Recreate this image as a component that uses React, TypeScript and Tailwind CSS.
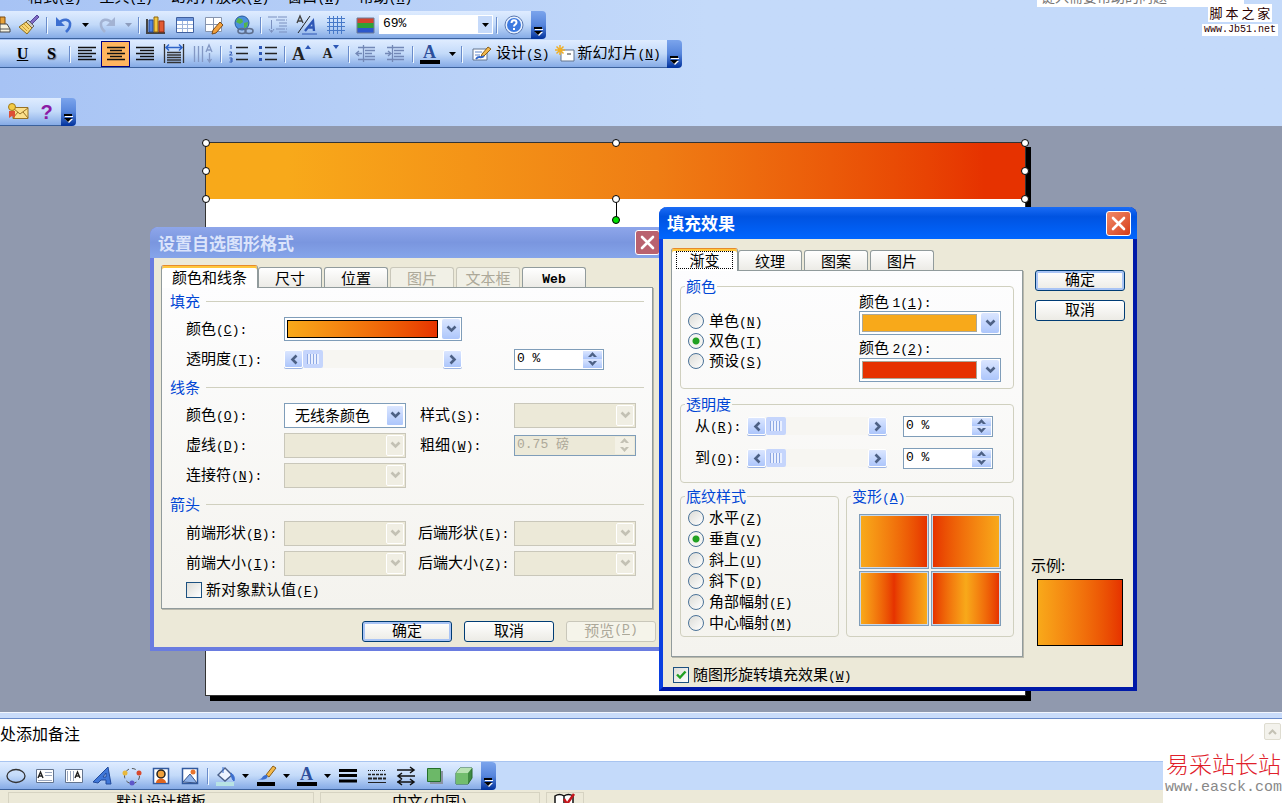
import { useState, type ReactNode } from "react";

const btnBlue = "bg-linear-to-b from-[#dbe6ff] to-[#adc6fb]";

function Icon({ children, label }: { children: ReactNode; label: string }) {
  return (
    <button type="button" aria-label={label} className="flex h-full w-[29px] shrink-0 items-center justify-center">
      <svg width="22" height="22" viewBox="0 0 22 22" fill="none">{children}</svg>
    </button>
  );
}

function Sep() {
  return (
    <span className="flex w-1.5 shrink-0 justify-center">
      <span className="h-4 w-px bg-[#6a8ccb] shadow-[1px_1px_0_#f1f9ff]" />
    </span>
  );
}

function Drop({ wide, dim }: { wide?: boolean; dim?: boolean }) {
  return (
    <button type="button" aria-label="更多" className={`flex h-full shrink-0 items-center justify-center ${wide ? "w-3.5" : "w-3"}`}>
      <svg width="7" height="4" viewBox="0 0 7 4"><path d="M0 0h7L3.500 4z" fill={dim ? "#8d9dbd" : "#000"} /></svg>
    </button>
  );
}

function Toolbar({ children, label }: { children: ReactNode; label: string }) {
  return (
    <div role="toolbar" aria-label={label} className="flex h-7 w-fit items-stretch">
      <div className="flex items-center border-b border-[#3b619c] bg-linear-to-b from-[#dfecff] via-[#c3daf9] to-[#86abe6]">
        {children}
      </div>
      <button
        type="button"
        aria-label="工具栏选项"
        className="flex w-[15px] items-end justify-center rounded-r bg-linear-to-b from-[#7ba4ec] via-[#5685dc] to-[#00309c] pb-0.5"
      >
        <svg width="9" height="10" viewBox="0 0 9 10">
          <path d="M1 2h8v1H1z" fill="#fff" />
          <path d="M0 0h8v2H0z" fill="#000" />
          <path d="M1 5h8L5 9z" fill="#fff" />
          <path d="M0 4h8L4 8z" fill="#000" />
        </svg>
      </button>
    </div>
  );
}

function Key({ k, colon }: { k: string; colon?: boolean }) {
  return (
    <span className="font-['Liberation_Mono',monospace] text-[13px]">
      (<u>{k}</u>){colon ? ":" : ""}
    </span>
  );
}

function Label({ text, k, id, className = "" }: { text: string; k: string; id: string; className?: string }) {
  return (
    <label htmlFor={id} className={`leading-5 whitespace-nowrap ${className}`}>
      {text}
      <Key k={k} colon />
    </label>
  );
}

function Chevron({ dim }: { dim?: boolean }) {
  return (
    <svg width="11" height="8" viewBox="0 0 11 8" fill="none">
      <path d="M1.500 1.500l4 4 4-4" stroke={dim ? "#c3c1b4" : "#4d6185"} strokeWidth="2.600" />
    </svg>
  );
}

function Combo({ id, value }: { id: string; value?: string }) {
  const off = value === undefined;
  return (
    <div className={`relative h-[25px] border ${off ? "border-[#c9c7ba] bg-[#ece9d8]" : "border-[#7f9db9] bg-white"}`}>
      <select id={id} disabled={off} className="h-full w-full appearance-none pl-2.5">
        {value && <option>{value}</option>}
      </select>
      <span
        className={`pointer-events-none absolute top-px right-px bottom-px flex w-[18px] items-center justify-center rounded-xs border border-white ${off ? "bg-[#f0eee3]" : btnBlue}`}
      >
        <Chevron dim={off} />
      </span>
    </div>
  );
}

function ColorCombo({ id, swatch }: { id: string; swatch: string }) {
  return (
    <button id={id} type="button" aria-haspopup="listbox" className="flex h-6 w-full items-stretch gap-1 border border-[#7f9db9] bg-white p-px">
      <span className={`my-px ml-px flex-1 border ${swatch}`} />
      <span className={`flex w-[18px] items-center justify-center rounded-xs ${btnBlue}`}>
        <Chevron />
      </span>
    </button>
  );
}

function Spin({ id, value, disabled }: { id: string; value: string; disabled?: boolean }) {
  const btn = `flex h-1/2 w-full items-center justify-center ${disabled ? "bg-[#f3f1e6]" : btnBlue}`;
  const color = disabled ? "#c3c1b4" : "#4d6185";
  return (
    <div className={`flex h-[21px] border border-[#7f9db9] p-px ${disabled ? "bg-[#ece9d8]" : "bg-white"}`}>
      <input
        id={id}
        defaultValue={value}
        disabled={disabled}
        className="w-full min-w-0 flex-1 pl-px font-['Liberation_Mono','Noto_Sans_CJK_SC',monospace] text-[13px] disabled:text-[#aca899]"
      />
      <span className="flex w-[19px] shrink-0 flex-col">
        <button type="button" aria-label="增加" disabled={disabled} className={btn}>
          <svg width="9" height="5" viewBox="0 0 9 5"><path d="M0 5l4.500-5L9 5H6L4.500 3.500 3 5z" fill={color} /></svg>
        </button>
        <button type="button" aria-label="减少" disabled={disabled} className={btn}>
          <svg width="9" height="5" viewBox="0 0 9 5"><path d="M0 0l4.500 5L9 0H6L4.500 1.500 3 0z" fill={color} /></svg>
        </button>
      </span>
    </div>
  );
}

function Slider({ id }: { id: string }) {
  const arrow = `flex w-[19px] shrink-0 items-center justify-center rounded-xs border border-white shadow-[0_1px_0_#9db5e4] ${btnBlue}`;
  return (
    <div className="flex h-[18px] items-stretch bg-[#f7f6f2]">
      <button type="button" aria-label="向左" className={arrow}>
        <svg width="8" height="11" viewBox="0 0 8 11" fill="none"><path d="M6.500 1.500l-4 4 4 4" stroke="#4d6185" strokeWidth="2.600" /></svg>
      </button>
      <input
        id={id}
        type="range"
        defaultValue={0}
        className="m-0 h-full w-0 min-w-0 flex-1 appearance-none bg-transparent [&::-webkit-slider-thumb]:h-[18px] [&::-webkit-slider-thumb]:w-5 [&::-webkit-slider-thumb]:appearance-none [&::-webkit-slider-thumb]:rounded-xs [&::-webkit-slider-thumb]:border-4 [&::-webkit-slider-thumb]:border-[#c5d5fc] [&::-webkit-slider-thumb]:bg-[repeating-linear-gradient(90deg,#8ea9e4_0_1px,#eaf0ff_1px_3px)]"
      />
      <button type="button" aria-label="向右" className={arrow}>
        <svg width="8" height="11" viewBox="0 0 8 11" fill="none"><path d="M1.500 1.500l4 4-4 4" stroke="#4d6185" strokeWidth="2.600" /></svg>
      </button>
    </div>
  );
}

function PushButton({ children, primary, disabled }: { children: ReactNode; primary?: boolean; disabled?: boolean }) {
  const look = disabled
    ? "border-[#c9c7ba] bg-[#f5f4ea] text-[#aca899]"
    : primary
      ? "border-[#003c74] bg-linear-to-b from-white to-[#ecebe5] text-black shadow-[inset_0_0_0_2px_#a9c4f5]"
      : "border-[#003c74] bg-linear-to-b from-white to-[#ecebe5] text-black";
  return (
    <button type="button" disabled={disabled} className={`flex h-[21px] w-[90px] items-center justify-center rounded-[3px] border pb-1 leading-4 ${look}`}>
      {children}
    </button>
  );
}

function Tab({
  children,
  active,
  disabled,
  width = "w-16",
  onClick,
}: {
  children: ReactNode;
  active?: boolean;
  disabled?: boolean;
  width?: string;
  onClick?: () => void;
}) {
  return (
    <button
      type="button"
      role="tab"
      aria-selected={!!active}
      disabled={disabled}
      onClick={onClick}
      className={`rounded-t-[3px] border border-b-0 whitespace-nowrap ${width} ${
        active
          ? "z-10 -mr-0.5 -mb-px h-[23px] border-[#919b9c] border-t-[#e68b2c] bg-white leading-5 shadow-[inset_0_2px_0_#ffc73c]"
          : disabled
            ? "h-5 border-[#c9c7ba] bg-[#f1f0e6] leading-[18px] text-[#aca899]"
            : "h-5 border-[#919b9c] bg-linear-to-b from-white to-[#ecebe6] leading-[18px]"
      }`}
    >
      {children}
    </button>
  );
}

function CloseButton({ dim }: { dim?: boolean }) {
  return (
    <button
      type="button"
      aria-label="关闭"
      className={`flex size-[25px] items-center justify-center rounded-[3px] border border-white ${dim ? "bg-[#b9626f]" : "bg-linear-to-br from-[#f08a68] to-[#d63a12]"}`}
    >
      <svg width="15" height="15" viewBox="0 0 15 15"><path d="M2 2l11 11M13 2L2 13" stroke="#fff" strokeWidth="2.600" strokeLinecap="round" /></svg>
    </button>
  );
}

function Check({ text, k, checked }: { text: string; k: string; checked?: boolean }) {
  return (
    <label className="flex h-6 items-center gap-1 leading-5 whitespace-nowrap">
      <span className="relative size-4">
        <input type="checkbox" defaultChecked={checked} className="peer block size-4 appearance-none border border-[#1c5180] bg-linear-to-br from-[#dcdcd7] to-white" />
        <svg viewBox="0 0 16 16" className="pointer-events-none absolute inset-0 hidden peer-checked:block">
          <path d="M4 7.500l3 3 5.500-6" stroke="#21a121" strokeWidth="2.400" fill="none" />
        </svg>
      </span>
      <span>{text}<Key k={k} /></span>
    </label>
  );
}

function Radio({ name, text, k, checked }: { name: string; text: string; k: string; checked?: boolean }) {
  return (
    <label className="flex h-5 items-center gap-[5px] leading-5 whitespace-nowrap">
      <input
        type="radio"
        name={name}
        defaultChecked={checked}
        className="size-4 appearance-none rounded-full border border-[#4a7298] bg-linear-to-br from-[#dcdcd7] to-white checked:bg-[radial-gradient(circle,#21a121_0_3px,#f4f4f0_4px)]"
      />
      <span>{text}<Key k={k} /></span>
    </label>
  );
}

function Heading({ children, className }: { children: ReactNode; className: string }) {
  return (
    <h3 className={`flex items-center gap-1.5 text-[#0046d5] ${className}`}>
      {children}
      <span className="h-px flex-1 bg-[#d0d0bf]" />
    </h3>
  );
}

function Group({ legend, className = "", children }: { legend: ReactNode; className?: string; children: ReactNode }) {
  return (
    <fieldset className={`min-w-0 rounded-[4px] border border-[#d0d0bf] ${className}`}>
      <legend className="ml-1 h-[18px] px-px leading-[18px] text-[#0046d5]">{legend}</legend>
      {children}
    </fieldset>
  );
}

function FormatDialog() {
  const tabs = ["颜色和线条", "尺寸", "位置", "图片", "文本框", "Web"];
  const [tab, setTab] = useState(tabs[0]);
  const row = "grid h-[30px] grid-cols-[98px_122px_108px_122px] items-center pl-6";
  return (
    <section aria-label="设置自选图形格式" className="absolute top-[101px] left-[150px] w-[515px] rounded-t-lg border-x-4 border-b-4 border-[#6a7ce0] bg-[#ece9d8]">
      <header className="-mx-1 flex h-[31px] items-center justify-between rounded-t-lg bg-linear-to-b from-[#8ea6ea] via-[#7a96df] to-[#86a5ea] pr-[5px] pl-2">
        <h2 className="text-[17px] leading-6 font-bold text-[#dbe4fb]">设置自选图形格式</h2>
        <CloseButton dim />
      </header>
      <div className="px-[7px] pt-[7px] pb-[5px]">
        <div role="tablist" className="flex items-end gap-0.5">
          {tabs.map((name, i) => (
            <Tab
              key={name}
              active={tab === name}
              disabled={name === "图片" || name === "文本框"}
              width={i === 0 ? "w-[97px]" : "w-16"}
              onClick={() => setTab(name)}
            >
              {name === "Web" ? <span className="font-['Liberation_Mono',monospace] text-[13px] font-bold">Web</span> : name}
            </Tab>
          ))}
        </div>
        <div className="mr-px border border-[#919b9c] bg-linear-to-b from-[#fdfdfe] to-[#f4f3ee] pr-2 pb-1.5 shadow-[1px_1px_0_#b9b8ac]">
          <Heading className="h-[26px] pl-2">填充</Heading>
          <div className={row}>
            <Label text="颜色" k="C" id="fill-color" />
            <div className="col-span-2 w-[178px]">
              <ColorCombo id="fill-color" swatch="border-black bg-linear-to-r from-[#f8a91a] to-[#e63200]" />
            </div>
          </div>
          <div className={row}>
            <Label text="透明度" k="T" id="fill-alpha" />
            <div className="col-span-2 w-[178px]"><Slider id="fill-alpha" /></div>
            <div className="w-[90px]"><Spin id="fill-alpha-value" value="0 %" /></div>
          </div>
          <Heading className="h-[26px] pl-2">线条</Heading>
          <div className={row}>
            <Label text="颜色" k="O" id="line-color" />
            <Combo id="line-color" value="无线条颜色" />
            <Label text="样式" k="S" id="line-style" className="pl-3.5" />
            <Combo id="line-style" />
          </div>
          <div className={row}>
            <Label text="虚线" k="D" id="line-dash" />
            <Combo id="line-dash" />
            <Label text="粗细" k="W" id="line-weight" className="pl-3.5" />
            <Spin id="line-weight" value="0.75 磅" disabled />
          </div>
          <div className={row}>
            <Label text="连接符" k="N" id="line-connector" />
            <Combo id="line-connector" />
          </div>
          <Heading className="h-7 pl-2">箭头</Heading>
          <div className={row}>
            <Label text="前端形状" k="B" id="begin-style" />
            <Combo id="begin-style" />
            <Label text="后端形状" k="E" id="end-style" className="pl-3" />
            <Combo id="end-style" />
          </div>
          <div className={row}>
            <Label text="前端大小" k="I" id="begin-size" />
            <Combo id="begin-size" />
            <Label text="后端大小" k="Z" id="end-size" className="pl-3" />
            <Combo id="end-size" />
          </div>
          <div className="pl-6"><Check text="新对象默认值" k="F" /></div>
        </div>
        <div className="-mr-0.5 mt-3 flex justify-end gap-3">
          <PushButton primary>确定</PushButton>
          <PushButton>取消</PushButton>
          <PushButton disabled>预览<Key k="P" /></PushButton>
        </div>
      </div>
    </section>
  );
}

function FillEffectsDialog() {
  const tabs = ["渐变", "纹理", "图案", "图片"];
  const [tab, setTab] = useState(tabs[0]);
  const variants = [
    "bg-linear-to-r from-[#f8a91a] to-[#e63200]",
    "bg-linear-to-r from-[#e63200] to-[#f8a91a]",
    "bg-linear-to-r from-[#f8a91a] via-[#e63200] to-[#f8a91a]",
    "bg-linear-to-r from-[#e63200] via-[#f8a91a] to-[#e63200]",
  ];
  return (
    <section aria-label="填充效果" className="absolute top-[81px] left-[659px] w-[478px] rounded-t-lg border-x-4 border-b-4 border-[#0a3fe0] border-r-[#0019a8] border-b-[#0019a8] bg-[#ece9d8]">
      <header className="-mx-1 flex h-8 items-center justify-between rounded-t-lg bg-linear-to-b from-[#1a6cf5] via-[#0053e1] via-30% to-[#0066ff] pr-1.5 pl-2">
        <h2 className="text-[17px] leading-6 font-bold text-white">填充效果</h2>
        <CloseButton />
      </header>
      <div className="flex gap-3 px-2 pt-[9px]">
        <div className="min-w-0 flex-1">
          <div role="tablist" className="flex items-end gap-0.5">
            {tabs.map((name, i) => (
              <Tab key={name} active={tab === name} width={i === 0 ? "w-[67px]" : "w-16"} onClick={() => setTab(name)}>
                {tab === name ? <span className="mx-1 block border border-dotted border-black leading-4">{name}</span> : name}
              </Tab>
            ))}
          </div>
          <div className="border border-[#919b9c] bg-linear-to-b from-[#fdfdfe] to-[#f4f3ee] px-2 pt-1.5 pb-[19px] shadow-[1px_1px_0_#b9b8ac]">
            <Group legend="颜色">
              <div className="flex justify-between pr-3 pb-1.5 pl-[7px]">
                <div className="flex flex-col pt-4">
                  <Radio name="colors" text="单色" k="N" />
                  <Radio name="colors" text="双色" k="T" checked />
                  <Radio name="colors" text="预设" k="S" />
                </div>
                <div className="flex w-[142px] flex-col">
                  <label htmlFor="color-1" className="h-4 leading-3">颜色 <span className="font-['Liberation_Mono',monospace] text-[13px]">1</span><Key k="1" colon /></label>
                  <ColorCombo id="color-1" swatch="border-[#aca899] bg-[#f8a91a]" />
                  <label htmlFor="color-2" className="h-[23px] leading-6">颜色 <span className="font-['Liberation_Mono',monospace] text-[13px]">2</span><Key k="2" colon /></label>
                  <ColorCombo id="color-2" swatch="border-[#aca899] bg-[#e63200]" />
                </div>
              </div>
            </Group>
            <Group legend="透明度" className="mt-1.5">
              <div className="grid grid-cols-[52px_minmax(0,1fr)_90px] items-center gap-y-1.5 pr-5 pb-[11px] pl-3.5">
                <Label text="从" k="R" id="alpha-from" />
                <div className="mr-4"><Slider id="alpha-from" /></div>
                <div className="flex h-[26px] flex-col justify-center"><Spin id="alpha-from-value" value="0 %" /></div>
                <Label text="到" k="O" id="alpha-to" />
                <div className="mr-4"><Slider id="alpha-to" /></div>
                <div className="flex h-[26px] flex-col justify-center"><Spin id="alpha-to-value" value="0 %" /></div>
              </div>
            </Group>
            <div className="mt-1 flex items-stretch gap-[7px]">
              <Group legend="底纹样式" className="w-[159px]">
                <div className="flex flex-col gap-px pt-[3px] pb-[3px] pl-[7px]">
                  <Radio name="shading" text="水平" k="Z" />
                  <Radio name="shading" text="垂直" k="V" checked />
                  <Radio name="shading" text="斜上" k="U" />
                  <Radio name="shading" text="斜下" k="D" />
                  <Radio name="shading" text="角部幅射" k="F" />
                  <Radio name="shading" text="中心幅射" k="M" />
                </div>
              </Group>
              <Group legend={<>变形<Key k="A" /></>} className="flex-1">
                <div className="grid grid-cols-2 gap-0.5 px-3 pt-[9px] pb-2.5">
                  {variants.map((v, i) => (
                    <button key={v} type="button" aria-label={`变形 ${i + 1}`} className="h-[55px] border border-[#7f9db9] bg-[#c9d9ea] p-px">
                      <span className={`block h-full w-full ${v}`} />
                    </button>
                  ))}
                </div>
              </Group>
            </div>
          </div>
          <div className="flex h-[30px] items-center pt-1.5 pl-0.5"><Check text="随图形旋转填充效果" k="W" checked /></div>
        </div>
        <div className="flex flex-col gap-[9px] pt-[22px] pb-[41px]">
          <PushButton primary>确定</PushButton>
          <PushButton>取消</PushButton>
          <figure className="-ml-1 mt-auto">
            <figcaption className="mb-0.5 leading-6">示例:</figcaption>
            <div className="ml-1.5 h-[67px] w-[86px] border border-black bg-linear-to-r from-[#f8a91a] to-[#e63200]" />
          </figure>
        </div>
      </div>
    </section>
  );
}

function Slide() {
  const handle = "absolute size-2 -translate-x-1/2 -translate-y-1/2 rounded-full border border-black";
  return (
    <div className="absolute top-4 left-[205px] h-[554px] w-[821px] border border-[#333] bg-white shadow-[5px_5px_0_#000]">
      <div className="relative h-14 bg-linear-to-r from-[#f8a91a] from-10% via-[#ef7d14] via-55% to-[#e63200] to-95%">
        <span className="absolute top-full left-1/2 h-5 w-px bg-black" />
        <span className={`${handle} top-0 left-0 bg-white`} />
        <span className={`${handle} top-0 left-1/2 bg-white`} />
        <span className={`${handle} top-0 left-full bg-white`} />
        <span className={`${handle} top-1/2 left-0 bg-white`} />
        <span className={`${handle} top-1/2 left-full bg-white`} />
        <span className={`${handle} top-full left-0 bg-white`} />
        <span className={`${handle} top-full left-1/2 bg-white`} />
        <span className={`${handle} top-full left-full bg-white`} />
        <span className={`${handle} top-[77px] left-1/2 bg-[#00e000]`} />
      </div>
    </div>
  );
}

function StandardToolbar() {
  return (
    <Toolbar label="常用">
      <button type="button" aria-label="粘贴" className="flex w-3.5 shrink-0 items-center">
        <svg width="11" height="20" viewBox="0 0 11 20"><path d="M0 2h5v8H0z" fill="#e8a33a" stroke="#7a4a10" /><path d="M0 9h7l3 5v3H0z" fill="#f6f2e0" stroke="#444" /><path d="M0 14h10" stroke="#555" /></svg>
      </button>
      <Icon label="格式刷">
        <path d="M19 1l2 2-7 7-2-2z" fill="#7f6bc4" stroke="#54459a" />
        <path d="M10 6l6 6-2 2-6-6z" fill="#c9c9c9" stroke="#666" />
        <path d="M8 8l6 6-5 6-8-7z" fill="#f7d675" stroke="#8b6b1d" />
        <path d="M4 12l5 5M6 10l5 5" stroke="#c89a30" />
      </Icon>
      <Sep />
      <Icon label="撤消">
        <path d="M3 3v9h9z" fill="#3d6fd0" />
        <path d="M6 9c4-5 12-4 11 2 0 3-2 5-4 7" stroke="#3d6fd0" strokeWidth="2.600" />
      </Icon>
      <Drop wide />
      <Icon label="恢复">
        <path d="M19 3v9h-9z" fill="#a3b3d3" />
        <path d="M16 9c-4-5-12-4-11 2 0 3 2 5 4 7" stroke="#a3b3d3" strokeWidth="2.600" />
      </Icon>
      <Drop wide dim />
      <Sep />
      <Icon label="插入图表">
        <path d="M2 5v14h18" stroke="#444" strokeWidth="2" />
        <path d="M4 6h4v12H4z" fill="#4f83e0" stroke="#25468d" />
        <path d="M9 3h4v15H9z" fill="#f4c63f" stroke="#8a6512" />
        <path d="M14 7h5v11h-5z" fill="#e25a33" stroke="#8a2b12" />
      </Icon>
      <Icon label="插入表格">
        <path d="M2.500 3.500h17v15h-17z" fill="#fff" stroke="#40609f" />
        <path d="M3 4h16v3H3z" fill="#6f97dc" />
        <path d="M3 10.500h16M3 14.500h16M8.500 7v11M13.500 7v11" stroke="#9eb4da" />
      </Icon>
      <Icon label="表格和边框">
        <path d="M2.500 3.500h16v14h-16z" fill="#fff" stroke="#8795ae" />
        <path d="M3 10.500h15M10.500 4v13" stroke="#8795ae" />
        <path d="M17 8l3 3-7 8-4 1 1-4z" fill="#f3a13c" stroke="#7b4a16" />
      </Icon>
      <Icon label="插入超链接">
        <circle cx="10" cy="9" r="7" fill="#4a90dc" stroke="#285a9e" />
        <path d="M6 4l4 1 1 3-3 2-4-2zM12 9l4-1-1 5-3 1z" fill="#54b54b" />
        <ellipse cx="10" cy="17" rx="4" ry="2.500" stroke="#5c6d8c" strokeWidth="1.600" /><ellipse cx="17" cy="17" rx="4" ry="2.500" stroke="#5c6d8c" strokeWidth="1.600" />
      </Icon>
      <Sep />
      <Icon label="全部展开"><path d="M1 3h20M4.500 6v12M2 15l2.500 3.500L7 15M9 6h11M12 9h8M12 12h8M9 15h11M12 18h8" stroke="#7b90bf" strokeDasharray="9 1" /></Icon>
      <Icon label="显示格式">
        <path d="M2 19L14 2" stroke="#222" />
        <path d="M1 9l3-7 3 7M2 7h4" stroke="#444" strokeWidth="1.400" />
        <path d="M9 17l8-10 1 10M12 13.500h6" stroke="#2e56b5" strokeWidth="2.400" /><path d="M6 20h15" stroke="#2e56b5" />
      </Icon>
      <Icon label="显示网格"><path d="M2 4.500h18M2 8.500h18M2 12.500h18M2 16.500h18M4.500 2v18M8.500 2v18M12.500 2v18M16.500 2v18" stroke="#4779c9" /></Icon>
      <Icon label="颜色/灰度">
        <path d="M3 4h17v5H3z" fill="#d3442e" /><path d="M3 9h17v5H3z" fill="#2fa136" /><path d="M3 14h17v5H3z" fill="#2d57cb" />
        <path d="M3 4h17v15H3z" stroke="#6d7c97" />
      </Icon>
      <div className="relative h-[19px] w-[114px] bg-white">
        <select aria-label="显示比例" className="block h-[17px] w-full appearance-none pl-1 font-['Liberation_Mono',monospace] text-[13px] leading-4"><option>69%</option></select>
        <span className="pointer-events-none absolute top-px right-px bottom-px flex w-3.5 items-center justify-center bg-[#c6dafa]">
          <svg width="7" height="4" viewBox="0 0 7 4"><path d="M0 0h7L3.500 4z" /></svg>
        </span>
      </div>
      <Sep />
      <Icon label="帮助">
        <circle cx="11" cy="11" r="8" fill="#3d7ae0" stroke="#e9f2ff" strokeWidth="2" /><circle cx="11" cy="11" r="9" stroke="#5a78b0" />
        <path d="M8.500 9c0-4 5-3.500 5-.5 0 2-2.500 2-2.500 4M11 14v2" stroke="#fff" strokeWidth="2" />
      </Icon>
      <span className="w-[3px]" />
    </Toolbar>
  );
}

function FormattingToolbar() {
  return (
    <Toolbar label="格式">
      <span className="w-2" />
      <button type="button" className="w-[29px] font-['Liberation_Serif',serif] text-base font-bold underline">U</button>
      <button type="button" className="w-[29px] font-['Liberation_Serif',serif] text-base font-bold text-shadow-[1px_1px_1px_#667]">S</button>
      <Sep />
      <Icon label="左对齐"><path d="M2 4.500h18M2 7.500h14M2 10.500h18M2 13.500h14M2 16.500h18" stroke="#111" strokeWidth="1.400" /></Icon>
      <span className="flex h-[26px] border border-[#000080] bg-[#ffb55f]">
        <button type="button" aria-label="居中" aria-pressed="true" className="flex w-[27px] items-center justify-center">
          <svg width="22" height="22" viewBox="0 0 22 22"><path d="M2 4.500h18M5 7.500h12M2 10.500h18M5 13.500h12M2 16.500h18" stroke="#111" strokeWidth="1.400" /></svg>
        </button>
      </span>
      <Icon label="右对齐"><path d="M2 4.500h18M6 7.500h14M2 10.500h18M6 13.500h14M2 16.500h18" stroke="#111" strokeWidth="1.400" /></Icon>
      <Icon label="分散对齐">
        <path d="M1.500 1v19M20.500 1v19M4 9.500h14M4 12h14M4 14.500h14M4 17h14M4 19.500h14" stroke="#333" strokeWidth="1.300" />
        <path d="M3 4.500h16M6 1.500l-3 3 3 3M16 1.500l3 3-3 3" stroke="#2d63c8" strokeWidth="1.500" />
      </Icon>
      <Icon label="更改文字方向"><path d="M2.500 3v16M6.500 3v16M10.500 3v16M17.500 10v9M15.500 16l2 3 2-3M14 9l3-7 3 7M15 7h4" stroke="#8398c4" strokeWidth="1.300" /></Icon>
      <Sep />
      <Icon label="编号"><path d="M9 4.500h12M9 10.500h12M9 16.500h12" stroke="#222" strokeWidth="1.600" /><path d="M4 2v4M2.500 9h2v1.500l-2 1.500h3M2.500 15h2.500v4H2.500M3 17h2" stroke="#2d57b5" strokeWidth="1" /></Icon>
      <Icon label="项目符号"><path d="M9 4.500h12M9 10.500h12M9 16.500h12" stroke="#222" strokeWidth="1.600" /><path d="M3 3h3v3H3zM3 9h3v3H3zM3 15h3v3H3z" fill="#2d57b5" /></Icon>
      <Sep />
      <button type="button" aria-label="增大字号" className="flex w-[29px] items-start justify-center font-['Liberation_Serif',serif] text-lg leading-6 font-bold text-[#222]">A<svg width="6" height="8" viewBox="0 0 6 8"><path d="M0 7l3-4 3 4z" fill="#2d57b5" /></svg></button>
      <button type="button" aria-label="减小字号" className="flex w-[29px] items-start justify-center font-['Liberation_Serif',serif] text-sm leading-6 font-bold text-[#222]">A<svg width="6" height="8" viewBox="0 0 6 8"><path d="M0 3l3 4 3-4z" fill="#2d57b5" /></svg></button>
      <Sep />
      <Icon label="减少缩进量"><path d="M3 4.500h17M10 7.500h10M10 10.500h7M10 13.500h10M3 16.500h17M8.500 2v17M7 10.500H1M4 8l-3 2.500L4 13" stroke="#7388b6" strokeWidth="1.300" /></Icon>
      <Icon label="增加缩进量"><path d="M3 4.500h17M10 7.500h10M10 10.500h7M10 13.500h10M3 16.500h17M8.500 2v17M1 10.500h6M4 8l3 2.500L4 13" stroke="#7388b6" strokeWidth="1.300" /></Icon>
      <Sep />
      <FontColor />
      <span className="w-0.5" />
      <Drop />
      <Sep />
      <button type="button" className="flex items-center gap-1 pl-2 leading-5 whitespace-nowrap">
        <svg width="20" height="18" viewBox="0 0 20 18">
          <path d="M1 4h14v11H1z" fill="#fff" stroke="#63748f" /><path d="M3 7h7M3 10h5" stroke="#5f85c9" />
          <path d="M16 2l3 2-7 7-3 1 1-3z" fill="#f2b84c" stroke="#875d19" /><path d="M4 14c3-4 5 0 8-3" stroke="#2d63c8" fill="none" strokeWidth="2" />
        </svg>
        <span>设计<Key k="S" /></span>
      </button>
      <button type="button" className="flex items-center gap-0.5 pr-1.5 pl-1.5 leading-5 whitespace-nowrap">
        <svg width="20" height="18" viewBox="0 0 20 18">
          <path d="M6 5h13v11H6z" fill="#fff" stroke="#63748f" /><path d="M12 9h4" stroke="#333" />
          <path d="M5 0v10M0 5h10M1.500 1.500l7 7M8.500 1.500l-7 7" stroke="#f0ae24" strokeWidth="1.500" />
        </svg>
        <span>新幻灯片<Key k="N" /></span>
      </button>
    </Toolbar>
  );
}

function FontColor() {
  return (
    <button type="button" aria-label="字体颜色" className="flex w-[29px] shrink-0 justify-center">
      <span className="w-5 border-b-4 border-black text-center font-['Liberation_Serif',serif] text-lg leading-4 font-bold text-[#2c4f9c]">A</span>
    </button>
  );
}

function DrawingToolbar() {
  return (
    <Toolbar label="绘图">
      <span className="w-px" />
      <Icon label="椭圆"><ellipse cx="11" cy="11" rx="9" ry="6.500" stroke="#333" strokeWidth="1.300" /></Icon>
      <Icon label="文本框"><path d="M2.500 4.500h17v13h-17z" fill="#fff" stroke="#63748f" /><path d="M4 13l2.500-6L9 13M5 11h3" stroke="#222" strokeWidth="1.400" /><path d="M11 7.500h7M11 10.500h7M4 15.500h14" stroke="#9aa7bf" /></Icon>
      <Icon label="竖排文本框"><path d="M2.500 4.500h17v13h-17z" fill="#fff" stroke="#63748f" /><path d="M12 13l2.500-6 2.500 6M13 11h3" stroke="#222" strokeWidth="1.400" /><path d="M4.500 6v10M7.500 6v10M10.500 6v10" stroke="#9aa7bf" /></Icon>
      <Icon label="艺术字"><path d="M1 17L16 2l3 17h-5v-4H9l-3 3zM11 12h3V8z" fill="#3f77d8" stroke="#234b9b" fillRule="evenodd" /></Icon>
      <Icon label="组织结构图"><circle cx="11" cy="11" r="7.500" stroke="#555" strokeDasharray="4 3" /><circle cx="4" cy="8" r="2.500" fill="#e8b83d" /><circle cx="18" cy="8" r="2.500" fill="#d8492d" /><circle cx="11" cy="18" r="2.500" fill="#5e57c9" /></Icon>
      <Icon label="剪贴画"><path d="M3.500 3.500h15v15h-15z" fill="#fff" stroke="#315a9f" strokeWidth="1.500" /><circle cx="11" cy="9" r="4" fill="#f0a13c" stroke="#222" strokeWidth="1.500" /><path d="M6 18c0-6 10-6 10 0z" fill="#e0661f" /></Icon>
      <Icon label="图片"><path d="M3.500 3.500h15v15h-15z" fill="#fff" stroke="#315a9f" strokeWidth="1.500" /><circle cx="14" cy="7" r="2.500" fill="#e8742c" /><path d="M4 17l7-8 7 9z" fill="#8fb3ea" stroke="#3a5689" /></Icon>
      <Sep />
      <Icon label="填充颜色"><path d="M4 10l7-7 7 7-7 6z" fill="#eef4ff" stroke="#4a5f88" strokeWidth="1.400" /><path d="M17 8c3 2 4 5 3 8-2-1-2-4-3-6zM9 8V2" fill="#3b6ecf" stroke="#3b6ecf" /><path d="M2 17h18v4H2z" fill="#b8e3e4" /></Icon>
      <Drop />
      <Icon label="线条颜色"><path d="M18 1l3 2-7 9-3-2z" fill="#f3b94b" stroke="#8a5d17" /><path d="M3 14c5 1 4-5 9-4 2 3-2 6-9 4z" fill="#3b6ecf" /><path d="M2 17h18v4H2z" fill="#000" /></Icon>
      <Drop />
      <FontColor />
      <Drop />
      <Icon label="线型"><path d="M2 5.500h18M2 10.500h18M2 16h18" stroke="#000" strokeWidth="3" /></Icon>
      <Icon label="虚线线型"><path d="M2 5.500h18" stroke="#222" strokeDasharray="1 1" /><path d="M2 9.500h18" stroke="#222" strokeWidth="1.500" strokeDasharray="3 1" /><path d="M2 13.500h18" stroke="#222" strokeWidth="2" strokeDasharray="4 1" /><path d="M2 17.500h18" stroke="#222" /></Icon>
      <Icon label="箭头样式"><path d="M2 5h16M15 2l4 3-4 3M4 11h16M7 8l-4 3 4 3M2 17h17M15 14l4 3-4 3M7 14l-4 3 4 3" stroke="#111" strokeWidth="1.500" /></Icon>
      <Icon label="阴影样式"><path d="M6 6h13v13H6z" fill="#8a93a3" /><path d="M3.500 3.500h13v13h-13z" fill="#6cb868" stroke="#24702a" /></Icon>
      <Icon label="三维效果样式"><path d="M3 8l4-5h12v10l-4 6H3z" fill="#3f8b42" stroke="#2a6a2e" /><path d="M3 8h12v11H3z" fill="#72bd6e" /><path d="M3 8l4-5h12l-4 5z" fill="#b8e2b3" /></Icon>
      <span className="w-[3px]" />
    </Toolbar>
  );
}

function Menu({ text, k }: { text: string; k: string }) {
  return <a href="#" className="whitespace-nowrap leading-4">{text}<Key k={k} /></a>;
}

export default function App() {
  return (
    <div className="relative flex h-screen flex-col overflow-hidden bg-[#c4dafa] font-['Noto_Sans_CJK_SC',sans-serif] text-[15px] text-black">
      <div className="flex flex-col bg-linear-to-r from-[#a7c3f4] to-[#c4dafa] to-55%">
        <div className="mb-px flex h-2.5 items-end justify-between overflow-hidden pb-[3px] pl-7">
          <nav className="flex items-end gap-[18px]">
            <Menu text="格式" k="O" />
            <Menu text="工具" k="T" />
            <Menu text="幻灯片放映" k="D" />
            <Menu text="窗口" k="W" />
            <Menu text="帮助" k="H" />
          </nav>
          <input aria-label="帮助" placeholder="键入需要帮助的问题" className="mr-[38px] h-[22px] w-[207px] bg-white pl-1 text-sm placeholder:text-[#777]" />
        </div>
        <StandardToolbar />
        <span className="h-px" />
        <FormattingToolbar />
        <div className="pt-[30px]">
          <Toolbar label="审阅">
            <span className="w-[3px]" />
            <Icon label="发送邮件"><path d="M6 6.500h15v11H6z" fill="#fbe08c" stroke="#987224" /><path d="M6 7l7 6 8-6M6 17l5-6M21 17l-5-6" stroke="#987224" /><circle cx="5" cy="6" r="3.500" fill="#f3cb45" stroke="#a07a1a" /><path d="M2 10h6v7l-3-2-3 2z" fill="#dd4d35" /></Icon>
            <button type="button" aria-label="帮助" className="w-[29px] font-['Liberation_Sans',sans-serif] text-xl leading-6 font-bold text-[#8b1aa5]">?</button>
          </Toolbar>
        </div>
      </div>

      <main className="relative min-h-0 flex-1 overflow-hidden bg-[#9099ae]">
        <Slide />
        <FormatDialog />
        <FillEffectsDialog />
      </main>

      <div className="h-[7px] shrink-0 border-t border-b border-t-[#f1f6ff] border-b-[#6a8ccb] bg-[#c9dcfa]" />
      <div className="flex h-[42px] shrink-0 items-start justify-between bg-white">
        <p className="pt-0.5 text-base">处添加备注</p>
        <button type="button" aria-label="向上滚动" className="mt-1 mr-px flex size-[17px] items-center justify-center rounded-xs border border-[#dedcd0] bg-[#f3f2ec]">
          <svg width="9" height="6" viewBox="0 0 9 6" fill="none"><path d="M1 5l3.500-3.500L8 5" stroke="#c3c1b4" strokeWidth="2" /></svg>
        </button>
      </div>
      <div className="h-[29px] shrink-0 border-t border-[#a8c4f0]">
        <DrawingToolbar />
      </div>
      <footer className="flex h-[13px] shrink-0 gap-1.5 overflow-hidden bg-[#ece9d8] pt-0.5 pl-2 text-center leading-4">
        <span className="h-6 w-[306px] border border-[#d6d3c2]">默认设计模板</span>
        <span className="h-6 w-[220px] border border-[#d6d3c2]">中文<span className="font-['Liberation_Mono',monospace] text-[13px]">(</span>中国<span className="font-['Liberation_Mono',monospace] text-[13px]">)</span></span>
        <span className="flex h-6 w-[38px] justify-center border border-[#d6d3c2]">
          <svg width="24" height="20" viewBox="0 0 24 20"><path d="M2 12V3c3-2 6-2 9 0 3-2 6-2 9 0v9zM11 3v9" fill="#fff" stroke="#111" strokeWidth="1.500" /><path d="M11 6l3 5 7-10" stroke="#c4161c" strokeWidth="2.500" fill="none" /></svg>
        </span>
      </footer>

      <div className="absolute top-1 right-1 text-center text-[#2b0000]">
        <p className="mx-auto w-fit bg-white px-0.5 text-[13px] leading-[18px]">脚 本 之 家</p>
        <p className="mt-0.5 bg-white px-0.5 font-['Liberation_Mono',monospace] text-[10px] leading-3">www.Jb51.net</p>
      </div>
      <div className="absolute right-0 bottom-0 bg-white pb-1 pl-0.5 text-center">
        <p className="text-[23px] leading-7 font-light text-[#e0202a]">易采站长站</p>
        <p className="font-['Liberation_Mono',monospace] text-[15px] leading-[22px] text-[#888]">www.easck.com</p>
      </div>
    </div>
  );
}
